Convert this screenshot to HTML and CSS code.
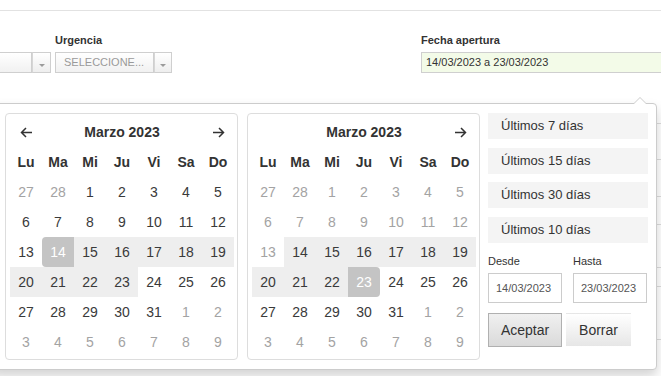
FILE: index.html
```html
<!DOCTYPE html>
<html lang="es">
<head>
<meta charset="utf-8">
<title>Filtros</title>
<link rel="stylesheet" href="styles.css">
</head>
<body>
<div class="page">
  <div class="topbar"></div>
  <div class="filters">
    <div class="field field-first">
      <div class="label">&nbsp;</div>
      <div class="select">
        <div class="select-main"></div>
        <div class="select-btn"><span class="tri"></span></div>
      </div>
    </div>
    <div class="field field-urg">
      <div class="label">Urgencia</div>
      <div class="select">
        <div class="select-main placeholder">SELECCIONE...</div>
        <div class="select-btn"><span class="tri"></span></div>
      </div>
    </div>
    <div class="field field-date">
      <div class="label">Fecha apertura</div>
      <div class="date-input">14/03/2023 a 23/03/2023</div>
    </div>
  </div>
  <div class="results">
    <div class="row r1"></div>
    <div class="row r2"></div>
    <div class="row r3"></div>
    <div class="row r4"></div>
    <div class="row r5"></div>
    <div class="row r6"></div>
    <div class="row r7"></div>
  </div>

  <div class="picker">
    <div class="cal">
      <div class="grid">
        <div class="nav"><svg width="13" height="11" viewBox="0 0 13 11"><path d="M12 5.5H1.5M6 1L1.5 5.5L6 10" fill="none" stroke="#333" stroke-width="1.5"/></svg></div>
        <div class="month">Marzo 2023</div>
        <div class="nav"><svg width="13" height="11" viewBox="0 0 13 11"><path d="M1 5.5H11.5M7 1L11.5 5.5L7 10" fill="none" stroke="#333" stroke-width="1.5"/></svg></div>
        <div class="wd">Lu</div><div class="wd">Ma</div><div class="wd">Mi</div><div class="wd">Ju</div><div class="wd">Vi</div><div class="wd">Sa</div><div class="wd">Do</div>
        <div class="d off">27</div><div class="d off">28</div><div class="d">1</div><div class="d">2</div><div class="d">3</div><div class="d">4</div><div class="d">5</div>
        <div class="d">6</div><div class="d">7</div><div class="d">8</div><div class="d">9</div><div class="d">10</div><div class="d">11</div><div class="d">12</div>
        <div class="d">13</div><div class="d start">14</div><div class="d in">15</div><div class="d in">16</div><div class="d in">17</div><div class="d in">18</div><div class="d in">19</div>
        <div class="d in">20</div><div class="d in">21</div><div class="d in">22</div><div class="d in">23</div><div class="d">24</div><div class="d">25</div><div class="d">26</div>
        <div class="d">27</div><div class="d">28</div><div class="d">29</div><div class="d">30</div><div class="d">31</div><div class="d off">1</div><div class="d off">2</div>
        <div class="d off">3</div><div class="d off">4</div><div class="d off">5</div><div class="d off">6</div><div class="d off">7</div><div class="d off">8</div><div class="d off">9</div>
      </div>
    </div>
    <div class="cal">
      <div class="grid">
        <div class="nav"></div>
        <div class="month">Marzo 2023</div>
        <div class="nav"><svg width="13" height="11" viewBox="0 0 13 11"><path d="M1 5.5H11.5M7 1L11.5 5.5L7 10" fill="none" stroke="#333" stroke-width="1.5"/></svg></div>
        <div class="wd">Lu</div><div class="wd">Ma</div><div class="wd">Mi</div><div class="wd">Ju</div><div class="wd">Vi</div><div class="wd">Sa</div><div class="wd">Do</div>
        <div class="d off">27</div><div class="d off">28</div><div class="d off">1</div><div class="d off">2</div><div class="d off">3</div><div class="d off">4</div><div class="d off">5</div>
        <div class="d off">6</div><div class="d off">7</div><div class="d off">8</div><div class="d off">9</div><div class="d off">10</div><div class="d off">11</div><div class="d off">12</div>
        <div class="d off">13</div><div class="d in">14</div><div class="d in">15</div><div class="d in">16</div><div class="d in">17</div><div class="d in">18</div><div class="d in">19</div>
        <div class="d in">20</div><div class="d in">21</div><div class="d in">22</div><div class="d end">23</div><div class="d">24</div><div class="d">25</div><div class="d">26</div>
        <div class="d">27</div><div class="d">28</div><div class="d">29</div><div class="d">30</div><div class="d">31</div><div class="d off">1</div><div class="d off">2</div>
        <div class="d off">3</div><div class="d off">4</div><div class="d off">5</div><div class="d off">6</div><div class="d off">7</div><div class="d off">8</div><div class="d off">9</div>
      </div>
    </div>
    <div class="ranges">
      <div class="range">Últimos 7 días</div>
      <div class="range">Últimos 15 días</div>
      <div class="range">Últimos 30 días</div>
      <div class="range">Últimos 10 días</div>
      <div class="inputs">
        <div class="inp-group">
          <div class="inp-label">Desde</div>
          <div class="inp">14/03/2023</div>
        </div>
        <div class="inp-group">
          <div class="inp-label">Hasta</div>
          <div class="inp">23/03/2023</div>
        </div>
      </div>
      <div class="buttons">
        <div class="btn btn-ok">Aceptar</div>
        <div class="btn btn-clear">Borrar</div>
      </div>
    </div>
  </div>
</div>
</body>
</html>
```
FILE: styles.css
```css
html, body {
  margin: 0;
  padding: 0;
  overflow: hidden;
  background: #fff;
}
body {
  font-family: "Liberation Sans", Arial, sans-serif;
  color: #333;
}
.page {
  position: relative;
  width: 661px;
  height: 376px;
  overflow: hidden;
}
.topbar {
  height: 10px;
  border-bottom: 1px solid #e2e2e2;
}
.filters {
  display: flex;
  padding-top: 23px;
}
.field {
  display: flex;
  flex-direction: column;
  flex-shrink: 0;
}
.label {
  font-size: 11px;
  font-weight: bold;
  line-height: 13px;
  height: 13px;
  margin-bottom: 5px;
  color: #333;
}
.field-first {
  margin-left: -70px;
  width: 121px;
}
.field-urg {
  margin-left: 4px;
  width: 117px;
}
.field-date {
  margin-left: 249px;
  width: 260px;
}
.select {
  display: flex;
  height: 21px;
}
.select-main {
  flex: 1;
  border: 1px solid #cfcfcf;
  background: linear-gradient(#ffffff, #f1f1f1);
  font-size: 11px;
  line-height: 19px;
  padding-left: 8px;
}
.placeholder {
  color: #9a9a9a;
}
.select-btn {
  width: 18px;
  border: 1px solid #cfcfcf;
  border-left: 1px solid #d6d6d6;
  background: linear-gradient(#ffffff, #eeeeee);
  display: flex;
  justify-content: center;
  align-items: flex-end;
  padding-bottom: 5px;
  box-sizing: border-box;
}
.field-first .select-btn {
  width: 19px;
}
.tri {
  width: 0;
  height: 0;
  border-left: 3px solid transparent;
  border-right: 3px solid transparent;
  border-top: 3px solid #9b9b9b;
}
.date-input {
  height: 21px;
  box-sizing: border-box;
  border: 1px solid #cfcfcf;
  background: #f3fbe8;
  font-size: 11px;
  line-height: 19px;
  padding-left: 4px;
  color: #333;
}
.results {
  margin-top: 30px;
}
.row {
  border-bottom: 1px solid #dcdcdc;
}
.r1 { height: 20px; }
.r2 { height: 35px; }
.r3 { height: 36px; }
.r4 { height: 27px; }
.r5 { height: 42px; }
.r6 { height: 18px; }
.r7 { height: 52px; }

/* picker popup */
.picker {
  position: absolute;
  left: -10px;
  top: 103px;
  width: 667px;
  height: 267px;
  box-sizing: border-box;
  background: #fff;
  border: 1px solid #cccccc;
  border-radius: 4px;
  box-shadow: 0 6px 12px rgba(0, 0, 0, 0.175);
  padding: 9px 8px 0 14px;
  display: flex;
  align-items: flex-start;
}
.picker::before {
  content: "";
  position: absolute;
  top: -7px;
  left: 642px;
  border-left: 7px solid transparent;
  border-right: 7px solid transparent;
  border-bottom: 7px solid #cccccc;
}
.picker::after {
  content: "";
  position: absolute;
  top: -6px;
  left: 643px;
  border-left: 6px solid transparent;
  border-right: 6px solid transparent;
  border-bottom: 6px solid #fff;
}
.cal {
  border: 1px solid #dddddd;
  border-radius: 4px;
  padding: 3px 3px 2px 4px;
  margin-right: 9px;
}
.cal + .cal {
  margin-right: 8px;
}
.grid {
  display: grid;
  grid-template-columns: repeat(7, 32px);
  grid-auto-rows: 30px;
  font-size: 14px;
  line-height: 30px;
  text-align: center;
}
.nav {
  display: flex;
  align-items: center;
  justify-content: center;
}
.nav svg {
  display: block;
}
.month {
  grid-column: span 5;
  font-weight: bold;
  color: #333;
}
.wd {
  font-weight: bold;
  color: #333;
}
.d {
  color: #3a3a3a;
}
.d.off {
  color: #a3a3a3;
}
.d.in {
  background: #eeeeee;
}
.d.start {
  background: #c4c4c4;
  color: #fff;
  border-radius: 4px 0 0 4px;
}
.d.end {
  background: #c4c4c4;
  color: #fff;
  border-radius: 0 4px 4px 0;
}

.ranges {
  width: 160px;
  display: flex;
  flex-direction: column;
}
.range {
  height: 26px;
  line-height: 26px;
  background: #f4f4f4;
  font-size: 13px;
  padding-left: 13px;
  margin-bottom: 8.67px;
  color: #333;
}
.inputs {
  display: flex;
  gap: 11px;
  margin-top: 3px;
}
.inp-group {
  display: flex;
  flex-direction: column;
}
.inp-label {
  font-size: 11px;
  line-height: 13px;
  margin-bottom: 5px;
  color: #333;
}
.inp {
  width: 74px;
  height: 30px;
  box-sizing: border-box;
  border: 1px solid #cccccc;
  font-size: 11px;
  line-height: 28px;
  padding-left: 7px;
  color: #555;
}
.buttons {
  display: flex;
  gap: 4px;
  margin-top: 10px;
}
.btn {
  height: 34px;
  box-sizing: border-box;
  font-size: 14px;
  line-height: 32px;
  text-align: center;
  color: #333;
}
.btn-ok {
  width: 74px;
  border: 1px solid #b0b0b0;
  background: linear-gradient(#f0f0f0, #dadada);
}
.btn-clear {
  width: 65px;
  border: 1px solid transparent;
  background: linear-gradient(#ffffff, #e6e6e6);
}
```
